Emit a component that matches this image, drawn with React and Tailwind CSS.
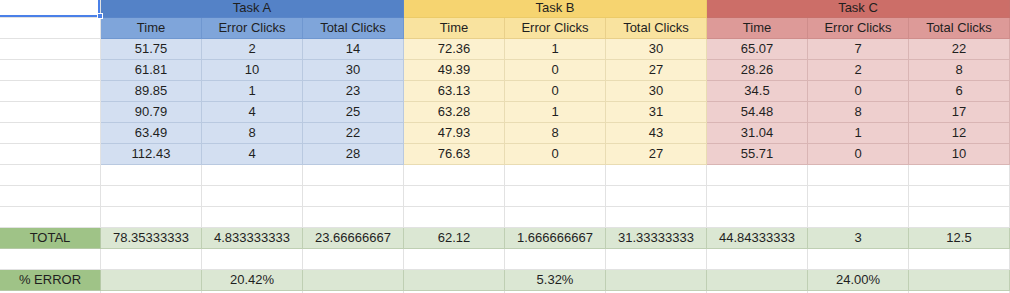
import React from 'react'

// colour sets per block (header / sub-header / body)
const A = {
  head: 'bg-[#5482c7] border-[#5a86c9]',
  sub: 'bg-[#7fa5da] border-[#6f97d0]',
  body: 'bg-[#d3dff1] border-[#b9c9e0]',
}
const B = {
  head: 'bg-[#f6d470] border-[#eccb68]',
  sub: 'bg-[#f9e39f] border-[#e9d08a]',
  body: 'bg-[#fcf1cf] border-[#e9dcb3]',
}
const C = {
  head: 'bg-[#cc6e68] border-[#c7706a]',
  sub: 'bg-[#dd9a98] border-[#cf8d8b]',
  body: 'bg-[#eecfce] border-[#d9b5b4]',
}
const PLAIN = 'bg-white border-[#e2e2e2]'
const LABEL = 'bg-[#9fc387] border-[#b5c9a6]'
const LIGHT = 'bg-[#dbe7d3] border-[#bfcfb3]'

const data = [
  ['51.75', '2', '14', '72.36', '1', '30', '65.07', '7', '22'],
  ['61.81', '10', '30', '49.39', '0', '27', '28.26', '2', '8'],
  ['89.85', '1', '23', '63.13', '0', '30', '34.5', '0', '6'],
  ['90.79', '4', '25', '63.28', '1', '31', '54.48', '8', '17'],
  ['63.49', '8', '22', '47.93', '8', '43', '31.04', '1', '12'],
  ['112.43', '4', '28', '76.63', '0', '27', '55.71', '0', '10'],
]

const totals = ['78.35333333', '4.833333333', '23.66666667', '62.12', '1.666666667', '31.33333333', '44.84333333', '3', '12.5']
const errors = ['', '20.42%', '', '', '5.32%', '', '', '24.00%', '']

function Cell({ cls, children, w = 'w-[101px]', h = 'h-[21px]' }) {
  return (
    <div className={`${w} ${h} shrink-0 border-r border-b flex items-center justify-center ${cls}`}>
      {children}
    </div>
  )
}

function Row({ children, h }) {
  return <div className={`flex ${h || 'h-[21px]'}`}>{children}</div>
}

const blocks = [A, B, C]

export default function App() {
  return (
    <div className="w-[1010px] h-[293px] overflow-hidden bg-white font-['Liberation_Sans',Arial,sans-serif] text-[13px] text-[#1f1f1f]">
      {/* task headers */}
      <Row h="h-[18px]">
        <div className="relative w-[101px] h-[18px] shrink-0 border-r border-b border-[#e2e2e2] bg-white z-10">
          <div className="absolute right-0 top-0 w-[2px] h-[17px] bg-[#4a80e8]" />
          <div className="absolute left-0 top-[15px] w-[101px] h-[2px] bg-[#4a80e8]" />
          <div className="absolute left-[97px] top-[13px] w-[6px] h-[6px] bg-[#4a80e8] border border-white" />
        </div>
        {['Task A', 'Task B', 'Task C'].map((t, i) => (
          <div
            key={t}
            className={`w-[303px] h-[18px] shrink-0 border-r border-b flex items-center justify-center pb-[2px] ${blocks[i].head}`}
          >
            {t}
          </div>
        ))}
      </Row>

      {/* column headers */}
      <Row>
        <Cell cls={PLAIN} />
        {blocks.map((b, i) =>
          ['Time', 'Error Clicks', 'Total Clicks'].map((t) => (
            <Cell key={i + t} cls={b.sub}>
              {t}
            </Cell>
          ))
        )}
      </Row>

      {/* data */}
      {data.map((r, ri) => (
        <Row key={ri}>
          <Cell cls={PLAIN} />
          {r.map((v, ci) => (
            <Cell key={ci} cls={blocks[Math.floor(ci / 3)].body}>
              {v}
            </Cell>
          ))}
        </Row>
      ))}

      {/* empty rows */}
      {[0, 1, 2].map((k) => (
        <Row key={'e' + k}>
          {Array.from({ length: 10 }).map((_, ci) => (
            <Cell key={ci} cls={PLAIN} />
          ))}
        </Row>
      ))}

      <Row>
        <Cell cls={LABEL}>TOTAL</Cell>
        {totals.map((v, ci) => (
          <Cell key={ci} cls={LIGHT}>
            {v}
          </Cell>
        ))}
      </Row>

      <Row>
        {Array.from({ length: 10 }).map((_, ci) => (
          <Cell key={ci} cls={PLAIN} />
        ))}
      </Row>

      <Row>
        <Cell cls={LABEL}>% ERROR</Cell>
        {errors.map((v, ci) => (
          <Cell key={ci} cls={LIGHT}>
            {v}
          </Cell>
        ))}
      </Row>

      <Row>
        {Array.from({ length: 10 }).map((_, ci) => (
          <Cell key={ci} cls={PLAIN} />
        ))}
      </Row>
    </div>
  )
}
